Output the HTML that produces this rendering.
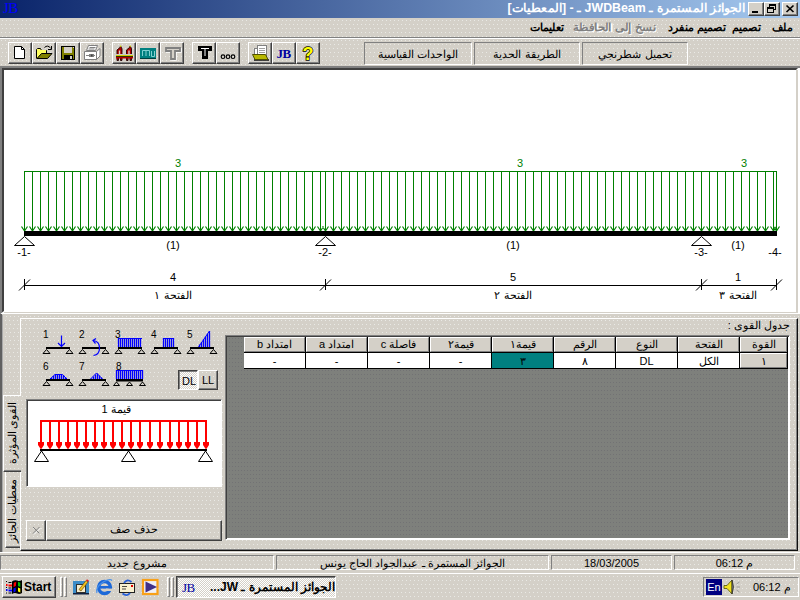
<!DOCTYPE html><html><head><meta charset="utf-8"><title>JWDBeam</title><style>
*{box-sizing:border-box;margin:0;padding:0}
html,body{width:800px;height:600px;overflow:hidden}
body{background:#d4d0c8;font-family:"Liberation Sans",sans-serif;font-size:11px;color:#000;position:relative}
.a{position:absolute}
.t{position:absolute;white-space:nowrap;line-height:1}
.rtl{direction:rtl}
.c{text-align:center}
.raised{border:1px solid;border-color:#fff #404040 #404040 #fff;box-shadow:inset -1px -1px 0 #808080}
.btn{position:absolute;border:1px solid;border-color:#fff #404040 #404040 #fff;box-shadow:inset -1px -1px 0 #808080, inset 1px 1px 0 #d4d0c8}
.sunk{border:1px solid;border-color:#808080 #fff #fff #808080}
</style></head><body>
<svg class="a" style="left:0;top:0" width="800" height="600"><defs><pattern id="dz" width="4" height="8" patternUnits="userSpaceOnUse"><rect x="2" y="4" width="1" height="1" fill="#e9e9e5"/><rect x="1" y="0" width="1" height="1" fill="#e9e9e5"/></pattern></defs><rect width="800" height="600" fill="url(#dz)"/></svg>
<div class="a" style="left:0;top:0;width:800px;height:18px;background:linear-gradient(90deg,#0a246a,#a6caf0)"></div>
<div class="t" style="left:3px;top:1px;font-family:'Liberation Serif',serif;font-size:15px;color:#0000ff;letter-spacing:-0.500px">JB</div>
<div class="t rtl" style="right:55px;top:2px;font-weight:bold;font-size:12px;color:#fff;transform:scaleX(1.028);transform-origin:100% 50%">الجوائز المستمرة ـ JWDBeam ـ - [المعطيات]</div>
<div class="btn" style="left:748px;top:2px;width:16px;height:14px;background:#d4d0c8"></div>
<div class="btn" style="left:764px;top:2px;width:16px;height:14px;background:#d4d0c8"></div>
<div class="btn" style="left:782px;top:2px;width:16px;height:14px;background:#d4d0c8"></div>
<svg class="a" style="left:748px;top:2px" width="50" height="14" viewBox="748 2 50 14" shape-rendering="crispEdges"><rect x="752" y="11" width="6" height="2" fill="#000"/><rect x="769.500" y="4.500" width="6" height="5" fill="none" stroke="#000"/><rect x="769" y="4" width="7" height="2" fill="#000"/><rect x="767.500" y="7.500" width="6" height="5" fill="#d4d0c8" stroke="#000"/><rect x="767" y="7" width="7" height="2" fill="#000"/><path d="M786.500 5.500L793.500 12M793.500 5.500L786.500 12" stroke="#000" stroke-width="1.700" shape-rendering="auto"/></svg>
<div class="t rtl" style="right:7px;top:22px;font-weight:bold;font-size:11px;">ملف</div>
<div class="t rtl" style="right:39px;top:22px;font-weight:bold;font-size:11px;">تصميم</div>
<div class="t rtl" style="right:74px;top:22px;font-weight:bold;font-size:11px;">تصميم منفرد</div>
<div class="t rtl" style="right:144px;top:22px;font-weight:bold;font-size:11px;color:#808080;text-shadow:1px 1px 0 #fff;transform:scaleX(1.08);transform-origin:100% 50%;">نسخ إلى الحافظة</div>
<div class="t rtl" style="right:236px;top:22px;font-weight:bold;font-size:11px;">تعليمات</div>
<div class="a" style="left:0;top:37px;width:800px;height:1px;background:#808080"></div>
<div class="a" style="left:0;top:38px;width:800px;height:1px;background:#fff"></div>
<div class="btn" style="left:8px;top:42px;width:24px;height:22px"></div>
<div class="btn" style="left:32px;top:42px;width:24px;height:22px"></div>
<div class="btn" style="left:56px;top:42px;width:24px;height:22px"></div>
<div class="btn" style="left:80px;top:42px;width:24px;height:22px"></div>
<div class="btn" style="left:112px;top:42px;width:24px;height:22px"></div>
<div class="btn" style="left:136px;top:42px;width:24px;height:22px"></div>
<div class="btn" style="left:160px;top:42px;width:24px;height:22px"></div>
<div class="btn" style="left:192px;top:42px;width:24px;height:22px"></div>
<div class="btn" style="left:216px;top:42px;width:24px;height:22px"></div>
<div class="btn" style="left:248px;top:42px;width:24px;height:22px"></div>
<div class="btn" style="left:272px;top:42px;width:24px;height:22px"></div>
<div class="btn" style="left:296px;top:42px;width:24px;height:22px"></div>
<div class="a" style="left:364px;top:42px;width:108px;height:23px;border:1px solid;border-color:#808080 #fff #fff #808080"></div>
<div class="t rtl c" style="left:364px;top:49px;width:108px;font-size:11px">الواحدات القياسية</div>
<div class="a" style="left:474px;top:42px;width:106px;height:23px;border:1px solid;border-color:#808080 #fff #fff #808080"></div>
<div class="t rtl c" style="left:474px;top:49px;width:106px;font-size:11px">الطريقة الحدية</div>
<div class="a" style="left:582px;top:42px;width:106px;height:23px;border:1px solid;border-color:#808080 #fff #fff #808080"></div>
<div class="t rtl c" style="left:582px;top:49px;width:106px;font-size:11px">تحميل شطرنجي</div>
<svg class="a" style="left:0;top:40px" width="330" height="26" viewBox="0 40 330 26"><path d="M14.5 46.5H21.5L24.5 49.5V58.5H14.5Z" fill="#fff" stroke="#000"/><path d="M21.5 46.5V49.5H24.5" fill="none" stroke="#000"/><path d="M36.5 58.5V49.5L37.5 48.5H40.5L41.5 50.5H46.5V53" fill="#ffff60" stroke="#000"/><path d="M37 50H46V58H37Z" fill="#ffff60"/><path d="M37 58.5L41.5 53.5H52L47.5 58.5Z" fill="#808000" stroke="#000"/><path d="M44.5 47.5Q47.5 44.5 50.5 48" fill="none" stroke="#000"/><path d="M51.5 46V49.5H48" fill="none" stroke="#000"/><rect x="61" y="46" width="14" height="14" fill="#000"/><rect x="62" y="47" width="12" height="12" fill="#808000"/><rect x="64" y="47" width="8" height="6" fill="#d4d0c8"/><rect x="64" y="55" width="9" height="5" fill="#000"/><rect x="70" y="56" width="2" height="3" fill="#d4d0c8"/><rect x="73" y="47" width="1" height="1" fill="#d4d0c8"/><g fill="#fff" stroke="#808080" stroke-width="1"><path d="M88.500 45.500H97.500L95.500 50.500H86.500Z"/><path d="M84.500 51.500H96.500V59.500H84.500Z"/><path d="M96.500 51.500L100 48.500V56L96.500 59.500Z"/></g><path d="M86 55.500H95M89.500 47.500H95.500M88.500 49H94.500" stroke="#808080"/><rect x="89" y="54" width="5" height="3" fill="#808080"/><rect x="91" y="54.500" width="1.500" height="2" fill="#404040"/><path d="M117 60.500V50L120 47.500L120.5 46L121.5 47.500L122 49V60.500H120.5V57H118.5V60.500Z" fill="#b00000" stroke="#200000" stroke-width="0.900"/><rect x="118.8" y="50.500" width="1.400" height="3.500" fill="#d4d0c8"/><rect x="120.2" y="45.500" width="1" height="1.500" fill="#e0e000"/><path d="M126.5 60.500V50L129.5 47.500L130.0 46L131.0 47.500L131.5 49V60.500H130.0V57H128.0V60.500Z" fill="#b00000" stroke="#200000" stroke-width="0.900"/><rect x="128.3" y="50.500" width="1.400" height="3.500" fill="#d4d0c8"/><rect x="129.7" y="45.500" width="1" height="1.500" fill="#e0e000"/><rect x="116" y="54" width="17" height="1" fill="#c8c8c8"/><rect x="116" y="55" width="17" height="1" fill="#d0d000"/><rect x="116" y="56" width="17" height="1" fill="#303000"/><rect x="116" y="57" width="17" height="1.500" fill="#b00000"/><rect x="140" y="48" width="16" height="11" fill="#008080"/><rect x="140" y="58" width="16" height="1" fill="#004040"/><path d="M142.500 56V50.500H149.500V56M146 50.500V56M151.500 51V56.500H154.500V51" fill="none" stroke="#80d0d0" stroke-width="1"/><path d="M166 48H180V51H175V59H171V51H166Z" fill="none" stroke="#fff" stroke-width="1.6" transform="translate(1,1)"/><path d="M166 48H180V51H175V59H171V51H166Z" fill="#d4d0c8" stroke="#808080" stroke-width="1.800"/><path d="M198 46H212V51H208V59H202V51H198Z" fill="#000"/><path d="M201 48.500H209M205 49V56" stroke="#fff" stroke-width="1"/><g fill="none" stroke="#000" stroke-width="1.200"><circle cx="223" cy="56.700" r="1.800"/><circle cx="228" cy="56.700" r="1.800"/><circle cx="233" cy="56.700" r="1.800"/></g><rect x="254.500" y="48.500" width="6" height="6" fill="#fff" stroke="#808080"/><rect x="257.500" y="45.500" width="9" height="10" fill="#fff" stroke="#808080"/><path d="M259 48.500H265M259 50.500H265M259 52.500H265" stroke="#a0a0a0"/><path d="M254 60H269" stroke="#000" stroke-width="1.400"/><path d="M252.500 54.500H265.500L268 59.500H255Z" fill="#b8b800" stroke="#505000"/><text x="276.500" y="57.500" font-family="Liberation Serif,serif" font-weight="bold" font-size="13" fill="#0000a0" letter-spacing="-0.5">JB</text><text x="302.500" y="59.500" font-family="Liberation Sans,sans-serif" font-weight="bold" font-size="18" fill="#ffff00" stroke="#000" stroke-width="1.400" paint-order="stroke" >?</text></svg>
<div class="a" style="left:0;top:66px;width:800px;height:248px;background:#fff;border-style:solid;border-width:4px 4px 3px 4px;border-color:#404040 #fff #fff #404040;box-shadow:inset 0 0 0 0 #000"></div>
<div class="a" style="left:0;top:66px;width:800px;height:2px;background:#808080"></div>
<div class="a" style="left:0;top:66px;width:2px;height:247px;background:#808080"></div>
<div class="a" style="left:796px;top:70px;width:2px;height:243px;background:#d4d0c8"></div>
<div class="a" style="left:4px;top:312px;width:794px;height:1px;background:#d4d0c8"></div>
<svg class="a" style="left:0;top:66px" width="800" height="249" viewBox="0 66 800 249"><path d="M24.5 171V231M32.5 171V231M40.5 171V231M48.5 171V231M56.5 171V231M64.5 171V231M72.5 171V231M80.5 171V231M88.5 171V231M96.5 171V231M104.5 171V231M112.5 171V231M120.5 171V231M128.5 171V231M136.5 171V231M144.5 171V231M152.5 171V231M160.5 171V231M168.5 171V231M176.5 171V231M184.5 171V231M192.5 171V231M200.5 171V231M208.5 171V231M216.5 171V231M224.5 171V231M232.5 171V231M240.5 171V231M248.5 171V231M256.5 171V231M264.5 171V231M272.5 171V231M280.5 171V231M288.5 171V231M296.5 171V231M304.5 171V231M312.5 171V231M320.5 171V231M325.5 171V231M333.5 171V231M341.5 171V231M349.5 171V231M357.5 171V231M365.5 171V231M373.5 171V231M381.5 171V231M389.5 171V231M397.5 171V231M405.5 171V231M413.5 171V231M421.5 171V231M429.5 171V231M437.5 171V231M445.5 171V231M453.5 171V231M461.5 171V231M469.5 171V231M477.5 171V231M485.5 171V231M493.5 171V231M501.5 171V231M509.5 171V231M517.5 171V231M525.5 171V231M533.5 171V231M541.5 171V231M549.5 171V231M557.5 171V231M565.5 171V231M573.5 171V231M581.5 171V231M589.5 171V231M597.5 171V231M605.5 171V231M613.5 171V231M621.5 171V231M629.5 171V231M637.5 171V231M645.5 171V231M653.5 171V231M661.5 171V231M669.5 171V231M677.5 171V231M685.5 171V231M693.5 171V231M701.5 171V231M709.5 171V231M717.5 171V231M725.5 171V231M733.5 171V231M741.5 171V231M749.5 171V231M757.5 171V231M765.5 171V231M773.5 171V231M776.5 171V231" stroke="#008000" stroke-width="1" fill="none" shape-rendering="crispEdges"/><path d="M24 171.500H777" stroke="#008000" stroke-width="1" shape-rendering="crispEdges"/><path d="M21.5 226.5L24.5 231L27.5 226.5M29.5 226.5L32.5 231L35.5 226.5M37.5 226.5L40.5 231L43.5 226.5M45.5 226.5L48.5 231L51.5 226.5M53.5 226.5L56.5 231L59.5 226.5M61.5 226.5L64.5 231L67.5 226.5M69.5 226.5L72.5 231L75.5 226.5M77.5 226.5L80.5 231L83.5 226.5M85.5 226.5L88.5 231L91.5 226.5M93.5 226.5L96.5 231L99.5 226.5M101.5 226.5L104.5 231L107.5 226.5M109.5 226.5L112.5 231L115.5 226.5M117.5 226.5L120.5 231L123.5 226.5M125.5 226.5L128.5 231L131.5 226.5M133.5 226.5L136.5 231L139.5 226.5M141.5 226.5L144.5 231L147.5 226.5M149.5 226.5L152.5 231L155.5 226.5M157.5 226.5L160.5 231L163.5 226.5M165.5 226.5L168.5 231L171.5 226.5M173.5 226.5L176.5 231L179.5 226.5M181.5 226.5L184.5 231L187.5 226.5M189.5 226.5L192.5 231L195.5 226.5M197.5 226.5L200.5 231L203.5 226.5M205.5 226.5L208.5 231L211.5 226.5M213.5 226.5L216.5 231L219.5 226.5M221.5 226.5L224.5 231L227.5 226.5M229.5 226.5L232.5 231L235.5 226.5M237.5 226.5L240.5 231L243.5 226.5M245.5 226.5L248.5 231L251.5 226.5M253.5 226.5L256.5 231L259.5 226.5M261.5 226.5L264.5 231L267.5 226.5M269.5 226.5L272.5 231L275.5 226.5M277.5 226.5L280.5 231L283.5 226.5M285.5 226.5L288.5 231L291.5 226.5M293.5 226.5L296.5 231L299.5 226.5M301.5 226.5L304.5 231L307.5 226.5M309.5 226.5L312.5 231L315.5 226.5M317.5 226.5L320.5 231L323.5 226.5M322.5 226.5L325.5 231L328.5 226.5M330.5 226.5L333.5 231L336.5 226.5M338.5 226.5L341.5 231L344.5 226.5M346.5 226.5L349.5 231L352.5 226.5M354.5 226.5L357.5 231L360.5 226.5M362.5 226.5L365.5 231L368.5 226.5M370.5 226.5L373.5 231L376.5 226.5M378.5 226.5L381.5 231L384.5 226.5M386.5 226.5L389.5 231L392.5 226.5M394.5 226.5L397.5 231L400.5 226.5M402.5 226.5L405.5 231L408.5 226.5M410.5 226.5L413.5 231L416.5 226.5M418.5 226.5L421.5 231L424.5 226.5M426.5 226.5L429.5 231L432.5 226.5M434.5 226.5L437.5 231L440.5 226.5M442.5 226.5L445.5 231L448.5 226.5M450.5 226.5L453.5 231L456.5 226.5M458.5 226.5L461.5 231L464.5 226.5M466.5 226.5L469.5 231L472.5 226.5M474.5 226.5L477.5 231L480.5 226.5M482.5 226.5L485.5 231L488.5 226.5M490.5 226.5L493.5 231L496.5 226.5M498.5 226.5L501.5 231L504.5 226.5M506.5 226.5L509.5 231L512.5 226.5M514.5 226.5L517.5 231L520.5 226.5M522.5 226.5L525.5 231L528.5 226.5M530.5 226.5L533.5 231L536.5 226.5M538.5 226.5L541.5 231L544.5 226.5M546.5 226.5L549.5 231L552.5 226.5M554.5 226.5L557.5 231L560.5 226.5M562.5 226.5L565.5 231L568.5 226.5M570.5 226.5L573.5 231L576.5 226.5M578.5 226.5L581.5 231L584.5 226.5M586.5 226.5L589.5 231L592.5 226.5M594.5 226.5L597.5 231L600.5 226.5M602.5 226.5L605.5 231L608.5 226.5M610.5 226.5L613.5 231L616.5 226.5M618.5 226.5L621.5 231L624.5 226.5M626.5 226.5L629.5 231L632.5 226.5M634.5 226.5L637.5 231L640.5 226.5M642.5 226.5L645.5 231L648.5 226.5M650.5 226.5L653.5 231L656.5 226.5M658.5 226.5L661.5 231L664.5 226.5M666.5 226.5L669.5 231L672.5 226.5M674.5 226.5L677.5 231L680.5 226.5M682.5 226.5L685.5 231L688.5 226.5M690.5 226.5L693.5 231L696.5 226.5M698.5 226.5L701.5 231L704.5 226.5M706.5 226.5L709.5 231L712.5 226.5M714.5 226.5L717.5 231L720.5 226.5M722.5 226.5L725.5 231L728.5 226.5M730.5 226.5L733.5 231L736.5 226.5M738.5 226.5L741.5 231L744.5 226.5M746.5 226.5L749.5 231L752.5 226.5M754.5 226.5L757.5 231L760.5 226.5M762.5 226.5L765.5 231L768.5 226.5M770.5 226.5L773.5 231L776.5 226.5M773.5 226.5L776.5 231L779.5 226.5" stroke="#008000" stroke-width="1.2" fill="none"/><rect x="24" y="231" width="753" height="5" fill="#000"/><path d="M24.5 236.5L14.5 245.5H34.5Z" fill="#fff" stroke="#000" stroke-width="1"/><path d="M325.5 236.5L315.5 245.5H335.5Z" fill="#fff" stroke="#000" stroke-width="1"/><path d="M701.5 236.5L691.5 245.5H711.5Z" fill="#fff" stroke="#000" stroke-width="1"/><path d="M24 285.500H777" stroke="#000" stroke-width="1" shape-rendering="crispEdges"/><path d="M24.5 279V290" stroke="#000" stroke-width="1" shape-rendering="crispEdges"/><path d="M19 290.500L30 279.500" stroke="#000" stroke-width="1"/><path d="M325.5 279V290" stroke="#000" stroke-width="1" shape-rendering="crispEdges"/><path d="M320 290.500L331 279.500" stroke="#000" stroke-width="1"/><path d="M701.5 279V290" stroke="#000" stroke-width="1" shape-rendering="crispEdges"/><path d="M696 290.500L707 279.500" stroke="#000" stroke-width="1"/><path d="M776.5 279V290" stroke="#000" stroke-width="1" shape-rendering="crispEdges"/><path d="M771 290.500L782 279.500" stroke="#000" stroke-width="1"/></svg>
<div class="t c" style="left:138px;top:158px;width:80px;font-size:11px;color:#008000;">3</div>
<div class="t c" style="left:480px;top:158px;width:80px;font-size:11px;color:#008000;">3</div>
<div class="t c" style="left:704px;top:158px;width:80px;font-size:11px;color:#008000;">3</div>
<div class="t c" style="left:133px;top:240px;width:80px;font-size:11px;color:#000;">(1)</div>
<div class="t c" style="left:473px;top:240px;width:80px;font-size:11px;color:#000;">(1)</div>
<div class="t c" style="left:698px;top:240px;width:80px;font-size:11px;color:#000;">(1)</div>
<div class="t c" style="left:-16px;top:247px;width:80px;font-size:11px;color:#000;">-1-</div>
<div class="t c" style="left:285px;top:247px;width:80px;font-size:11px;color:#000;">-2-</div>
<div class="t c" style="left:661px;top:247px;width:80px;font-size:11px;color:#000;">-3-</div>
<div class="t c" style="left:735px;top:247px;width:80px;font-size:11px;color:#000;">-4-</div>
<div class="t c" style="left:133px;top:272px;width:80px;font-size:11px;color:#000;">4</div>
<div class="t c" style="left:473px;top:272px;width:80px;font-size:11px;color:#000;">5</div>
<div class="t c" style="left:698px;top:272px;width:80px;font-size:11px;color:#000;">1</div>
<div class="t c" style="left:133px;top:290px;width:80px;font-size:11px;color:#000;direction:rtl;">الفتحة ١</div>
<div class="t c" style="left:473px;top:290px;width:80px;font-size:11px;color:#000;direction:rtl;">الفتحة ٢</div>
<div class="t c" style="left:698px;top:290px;width:80px;font-size:11px;color:#000;direction:rtl;">الفتحة ٣</div>
<div class="a" style="left:0;top:314px;width:2px;height:238px;background:#606060"></div>
<div class="a" style="left:2px;top:315px;width:1px;height:237px;background:#a8a8a8"></div>
<div class="a" style="left:20px;top:318px;width:778px;height:233px;border:1px solid;border-color:#fff #101010 #101010 #fff;box-shadow:inset -1px -1px 0 #808080"></div>
<div class="a" style="left:20px;top:396px;width:1px;height:74px;background:#d4d0c8"></div>
<div class="a" style="left:3px;top:395px;width:18px;height:77px;border:1px solid;border-color:#fff transparent #404040 #fff;border-right:none;box-shadow:inset 0 -1px 0 #808080"></div>
<div class="a" style="left:5px;top:472px;width:15px;height:76px;border:1px solid;border-color:transparent transparent #404040 #fff;border-right:none;border-top:none;box-shadow:inset 0 -1px 0 #808080"></div>
<div class="t rtl" style="left:12px;top:433px;font-size:10.500px;transform:translate(-50%,-50%) rotate(-90deg);transform-origin:50% 50%">القوى المؤثرة</div>
<div class="t rtl" style="left:12px;top:511px;font-size:11px;transform:translate(-50%,-50%) rotate(-90deg);transform-origin:50% 50%">معطيات الجائز</div>
<svg class="a" style="left:30px;top:325px" width="195" height="65" viewBox="30 325 195 65"><rect x="46" y="347" width="24" height="2" fill="#000"/><path d="M46.5 349.5L43.0 353.5H50.0Z" fill="#d4d0c8" stroke="#000" stroke-width="1"/><path d="M69.5 349.5L66.0 353.5H73.0Z" fill="#d4d0c8" stroke="#000" stroke-width="1"/><rect x="82" y="347" width="24" height="2" fill="#000"/><path d="M82.5 349.5L79.0 353.5H86.0Z" fill="#d4d0c8" stroke="#000" stroke-width="1"/><path d="M105.5 349.5L102.0 353.5H109.0Z" fill="#d4d0c8" stroke="#000" stroke-width="1"/><rect x="118" y="347" width="24" height="2" fill="#000"/><path d="M118.5 349.5L115.0 353.5H122.0Z" fill="#d4d0c8" stroke="#000" stroke-width="1"/><path d="M141.5 349.5L138.0 353.5H145.0Z" fill="#d4d0c8" stroke="#000" stroke-width="1"/><rect x="154" y="347" width="24" height="2" fill="#000"/><path d="M154.5 349.5L151.0 353.5H158.0Z" fill="#d4d0c8" stroke="#000" stroke-width="1"/><path d="M177.5 349.5L174.0 353.5H181.0Z" fill="#d4d0c8" stroke="#000" stroke-width="1"/><rect x="190" y="347" width="24" height="2" fill="#000"/><path d="M190.5 349.5L187.0 353.5H194.0Z" fill="#d4d0c8" stroke="#000" stroke-width="1"/><path d="M213.5 349.5L210.0 353.5H217.0Z" fill="#d4d0c8" stroke="#000" stroke-width="1"/><rect x="46" y="379" width="24" height="2" fill="#000"/><path d="M46.5 381.5L43.0 385.5H50.0Z" fill="#d4d0c8" stroke="#000" stroke-width="1"/><path d="M69.5 381.5L66.0 385.5H73.0Z" fill="#d4d0c8" stroke="#000" stroke-width="1"/><rect x="82" y="379" width="24" height="2" fill="#000"/><path d="M82.5 381.5L79.0 385.5H86.0Z" fill="#d4d0c8" stroke="#000" stroke-width="1"/><path d="M105.5 381.5L102.0 385.5H109.0Z" fill="#d4d0c8" stroke="#000" stroke-width="1"/><path d="M61.5 335.500V346.500M58 343L61.500 346.500L65 343" stroke="#0000ff" stroke-width="1.200" fill="none"/><path d="M93.500 340.500Q99.500 341.500 99.500 348Q99.500 354.500 93.500 355.500" stroke="#0000ff" stroke-width="1.200" fill="none"/><path d="M96 338.500L93 340.500L95.500 343.500" stroke="#0000ff" stroke-width="1.200" fill="none"/><path d="M118.5 338.0V347M120.5 338.0V347M122.5 338.0V347M124.5 338.0V347M126.5 338.0V347M128.5 338.0V347M130.5 338.0V347M132.5 338.0V347M134.5 338.0V347M136.5 338.0V347M138.5 338.0V347M140.5 338.0V347" stroke="#0000ff" stroke-width="1.3" fill="none"/><path d="M118 338.500H142" stroke="#0000ff" stroke-width="1"/><path d="M163.5 338.0V347M165.5 338.0V347M167.5 338.0V347M169.5 338.0V347M171.5 338.0V347M173.5 338.0V347" stroke="#0000ff" stroke-width="1.3" fill="none"/><path d="M163 338.500H174" stroke="#0000ff" stroke-width="1"/><path d="M199.5 344.6V347M201.5 341.9V347M203.5 339.2V347M205.5 336.5V347M207.5 333.7V347M209.5 331.0V347" stroke="#0000ff" stroke-width="1.3" fill="none"/><path d="M198.500 347L209.500 331" stroke="#0000ff" stroke-width="1"/><path d="M51.5 378.0V379M53.5 376.0V379M55.5 374.0V379M57.5 374.0V379M59.5 374.0V379M61.5 374.0V379M63.5 375.0V379M65.5 377.0V379" stroke="#0000ff" stroke-width="1.3" fill="none"/><path d="M50 379L55 374.500H62.500L67 379" stroke="#0000ff" stroke-width="1" fill="none"/><path d="M91.5 378.5V379M93.5 376.5V379M95.5 374.5V379M97.5 373.5V379M99.5 375.5V379M101.5 377.5V379" stroke="#0000ff" stroke-width="1.3" fill="none"/><path d="M90.500 379L96.500 373L102.500 379" stroke="#0000ff" stroke-width="1" fill="none"/><path d="M116.5 370.0V379M118.5 370.0V379M120.5 370.0V379M122.5 370.0V379M124.5 370.0V379M126.5 370.0V379M128.5 370.0V379M130.5 370.0V379M132.5 370.0V379M134.5 370.0V379M136.5 370.0V379M138.5 370.0V379M140.5 370.0V379M142.5 370.0V379" stroke="#0000ff" stroke-width="1.3" fill="none"/><path d="M116 370.500H143" stroke="#0000ff" stroke-width="1"/><rect x="116" y="379" width="27" height="2.500" fill="#000"/><path d="M116.5 382L113.5 385.500H119.5Z" fill="#d4d0c8" stroke="#000" stroke-width="1"/><path d="M129.5 382L126.5 385.500H132.5Z" fill="#d4d0c8" stroke="#000" stroke-width="1"/><path d="M142.5 382L139.5 385.500H145.5Z" fill="#d4d0c8" stroke="#000" stroke-width="1"/></svg>
<div class="t" style="left:43px;top:330px;font-size:10px">1</div>
<div class="t" style="left:79px;top:330px;font-size:10px">2</div>
<div class="t" style="left:115px;top:330px;font-size:10px">3</div>
<div class="t" style="left:151px;top:330px;font-size:10px">4</div>
<div class="t" style="left:187px;top:330px;font-size:10px">5</div>
<div class="t" style="left:43px;top:362px;font-size:10px">6</div>
<div class="t" style="left:79px;top:362px;font-size:10px">7</div>
<div class="t" style="left:116px;top:362px;font-size:10px">8</div>
<div class="a" style="left:178px;top:370px;width:20px;height:20px;border:1px solid;border-color:#404040 #fff #fff #404040;box-shadow:inset 1px 1px 0 #808080;background-color:#fff;background-image:linear-gradient(45deg,#d4d0c8 25%,transparent 25%,transparent 75%,#d4d0c8 75%),linear-gradient(45deg,#d4d0c8 25%,transparent 25%,transparent 75%,#d4d0c8 75%);background-size:2px 2px;background-position:0 0,1px 1px"></div>
<div class="btn" style="left:198px;top:370px;width:20px;height:20px"></div>
<div class="t c" style="left:179px;top:376px;width:20px;font-size:11px">DL</div>
<div class="t c" style="left:198px;top:375px;width:20px;font-size:11px">LL</div>
<div class="a" style="left:26px;top:399px;width:196px;height:88px;background:#fff;border:1px solid;border-color:#808080 #fff #fff #808080;box-shadow:inset 1px 1px 0 #404040"></div>
<div class="t c rtl" style="left:76px;top:404px;width:80px;font-size:11px">قيمة 1</div>
<svg class="a" style="left:26px;top:399px" width="196" height="88" viewBox="26 399 196 88"><rect x="40" y="420" width="167" height="2" fill="#ff0000"/><rect x="40" y="420" width="2" height="23" fill="#ff0000"/><path d="M38 442H44V445L41 449.500L38 445Z" fill="#ff0000"/><rect x="49" y="420" width="2" height="23" fill="#ff0000"/><path d="M47 442H53V445L50 449.500L47 445Z" fill="#ff0000"/><rect x="58" y="420" width="2" height="23" fill="#ff0000"/><path d="M56 442H62V445L59 449.500L56 445Z" fill="#ff0000"/><rect x="67" y="420" width="2" height="23" fill="#ff0000"/><path d="M65 442H71V445L68 449.500L65 445Z" fill="#ff0000"/><rect x="76" y="420" width="2" height="23" fill="#ff0000"/><path d="M74 442H80V445L77 449.500L74 445Z" fill="#ff0000"/><rect x="85" y="420" width="2" height="23" fill="#ff0000"/><path d="M83 442H89V445L86 449.500L83 445Z" fill="#ff0000"/><rect x="94" y="420" width="2" height="23" fill="#ff0000"/><path d="M92 442H98V445L95 449.500L92 445Z" fill="#ff0000"/><rect x="103" y="420" width="2" height="23" fill="#ff0000"/><path d="M101 442H107V445L104 449.500L101 445Z" fill="#ff0000"/><rect x="112" y="420" width="2" height="23" fill="#ff0000"/><path d="M110 442H116V445L113 449.500L110 445Z" fill="#ff0000"/><rect x="121" y="420" width="2" height="23" fill="#ff0000"/><path d="M119 442H125V445L122 449.500L119 445Z" fill="#ff0000"/><rect x="130" y="420" width="2" height="23" fill="#ff0000"/><path d="M128 442H134V445L131 449.500L128 445Z" fill="#ff0000"/><rect x="139" y="420" width="2" height="23" fill="#ff0000"/><path d="M137 442H143V445L140 449.500L137 445Z" fill="#ff0000"/><rect x="149" y="420" width="2" height="23" fill="#ff0000"/><path d="M147 442H153V445L150 449.500L147 445Z" fill="#ff0000"/><rect x="159" y="420" width="2" height="23" fill="#ff0000"/><path d="M157 442H163V445L160 449.500L157 445Z" fill="#ff0000"/><rect x="169" y="420" width="2" height="23" fill="#ff0000"/><path d="M167 442H173V445L170 449.500L167 445Z" fill="#ff0000"/><rect x="178" y="420" width="2" height="23" fill="#ff0000"/><path d="M176 442H182V445L179 449.500L176 445Z" fill="#ff0000"/><rect x="187" y="420" width="2" height="23" fill="#ff0000"/><path d="M185 442H191V445L188 449.500L185 445Z" fill="#ff0000"/><rect x="196" y="420" width="2" height="23" fill="#ff0000"/><path d="M194 442H200V445L197 449.500L194 445Z" fill="#ff0000"/><rect x="205" y="420" width="2" height="23" fill="#ff0000"/><path d="M203 442H209V445L206 449.500L203 445Z" fill="#ff0000"/><rect x="40" y="449" width="167" height="2" fill="#000"/><path d="M41.5 451L34.5 461.500H48.5Z" fill="#fff" stroke="#000" stroke-width="1"/><path d="M128.5 451L121.5 461.500H135.5Z" fill="#fff" stroke="#000" stroke-width="1"/><path d="M205.5 451L198.5 461.500H212.5Z" fill="#fff" stroke="#000" stroke-width="1"/></svg>
<div class="btn" style="left:26px;top:520px;width:20px;height:21px"></div>
<svg class="a" style="left:31px;top:525px" width="10" height="10" viewBox="0 0 10 10"><path d="M2 2L8.5 8.5M8.5 2L2 8.5" stroke="#fff" stroke-width="1" transform="translate(1,1)"/><path d="M2 2L8.5 8.5M8.5 2L2 8.5" stroke="#808080" stroke-width="1"/></svg>
<div class="btn" style="left:46px;top:520px;width:176px;height:21px"></div>
<div class="t c rtl" style="left:46px;top:524px;width:176px;font-size:11px">حذف صف</div>
<div class="t rtl" style="right:10px;top:320px;font-size:11px">جدول القوى :</div>
<div class="a" style="left:225px;top:335px;width:565px;height:205px;background:#7e807c;border:1px solid;border-color:#808080 #fff #fff #808080;box-shadow:inset 1px 1px 0 #404040, inset -1px -1px 0 #fff"></div>
<svg class="a" style="left:227px;top:337px" width="561" height="201"><defs><pattern id="dg" width="3" height="4" patternUnits="userSpaceOnUse"><rect x="2" y="1" width="1" height="1" fill="#727274"/></pattern></defs><rect width="561" height="201" fill="url(#dg)"/></svg>
<div class="a" style="left:244px;top:337px;width:544px;height:32px;background:#000"></div>
<div class="a" style="left:244px;top:337px;width:61px;height:15px;background:#d4d0c8;border:1px solid;border-color:#fff #808080 #808080 #fff"></div>
<div class="t c rtl" style="left:244px;top:339px;width:61px;font-size:11px">امتداد b</div>
<div class="a" style="left:244px;top:353px;width:61px;height:15px;background:#fff"></div>
<div class="t c rtl" style="left:244px;top:356px;width:61px;font-size:11px">-</div>
<div class="a" style="left:306px;top:337px;width:61px;height:15px;background:#d4d0c8;border:1px solid;border-color:#fff #808080 #808080 #fff"></div>
<div class="t c rtl" style="left:306px;top:339px;width:61px;font-size:11px">امتداد a</div>
<div class="a" style="left:306px;top:353px;width:61px;height:15px;background:#fff"></div>
<div class="t c rtl" style="left:306px;top:356px;width:61px;font-size:11px">-</div>
<div class="a" style="left:368px;top:337px;width:61px;height:15px;background:#d4d0c8;border:1px solid;border-color:#fff #808080 #808080 #fff"></div>
<div class="t c rtl" style="left:368px;top:339px;width:61px;font-size:11px">فاصلة c</div>
<div class="a" style="left:368px;top:353px;width:61px;height:15px;background:#fff"></div>
<div class="t c rtl" style="left:368px;top:356px;width:61px;font-size:11px">-</div>
<div class="a" style="left:430px;top:337px;width:61px;height:15px;background:#d4d0c8;border:1px solid;border-color:#fff #808080 #808080 #fff"></div>
<div class="t c rtl" style="left:430px;top:339px;width:61px;font-size:11px">قيمة٢</div>
<div class="a" style="left:430px;top:353px;width:61px;height:15px;background:#fff"></div>
<div class="t c rtl" style="left:430px;top:356px;width:61px;font-size:11px">-</div>
<div class="a" style="left:492px;top:337px;width:61px;height:15px;background:#d4d0c8;border:1px solid;border-color:#fff #808080 #808080 #fff"></div>
<div class="t c rtl" style="left:492px;top:339px;width:61px;font-size:11px">قيمة١</div>
<div class="a" style="left:492px;top:353px;width:61px;height:15px;background:#008080"></div>
<div class="t c rtl" style="left:492px;top:356px;width:61px;font-size:11px">٣</div>
<div class="a" style="left:554px;top:337px;width:61px;height:15px;background:#d4d0c8;border:1px solid;border-color:#fff #808080 #808080 #fff"></div>
<div class="t c rtl" style="left:554px;top:339px;width:61px;font-size:11px">الرقم</div>
<div class="a" style="left:554px;top:353px;width:61px;height:15px;background:#fff"></div>
<div class="t c rtl" style="left:554px;top:356px;width:61px;font-size:11px">٨</div>
<div class="a" style="left:616px;top:337px;width:61px;height:15px;background:#d4d0c8;border:1px solid;border-color:#fff #808080 #808080 #fff"></div>
<div class="t c rtl" style="left:616px;top:339px;width:61px;font-size:11px">النوع</div>
<div class="a" style="left:616px;top:353px;width:61px;height:15px;background:#fff"></div>
<div class="t c rtl" style="left:616px;top:356px;width:61px;font-size:11px">DL</div>
<div class="a" style="left:678px;top:337px;width:61px;height:15px;background:#d4d0c8;border:1px solid;border-color:#fff #808080 #808080 #fff"></div>
<div class="t c rtl" style="left:678px;top:339px;width:61px;font-size:11px">الفتحة</div>
<div class="a" style="left:678px;top:353px;width:61px;height:15px;background:#fff"></div>
<div class="t c rtl" style="left:678px;top:356px;width:61px;font-size:11px">الكل</div>
<div class="a" style="left:740px;top:337px;width:47px;height:15px;background:#d4d0c8;border:1px solid;border-color:#fff #808080 #808080 #fff"></div>
<div class="t c rtl" style="left:740px;top:339px;width:47px;font-size:11px">القوة</div>
<div class="a" style="left:740px;top:353px;width:47px;height:15px;background:#d4d0c8;border:1px solid;border-color:#fff #808080 #808080 #fff"></div>
<div class="t c rtl" style="left:740px;top:356px;width:47px;font-size:11px">١</div>
<div class="a" style="left:0;top:552px;width:800px;height:1px;background:#fff"></div>
<div class="a sunk" style="left:0px;top:555px;width:274px;height:15px"></div>
<div class="t c rtl" style="left:0px;top:558px;width:274px;font-size:11px">مشروع جديد</div>
<div class="a sunk" style="left:276px;top:555px;width:273px;height:15px"></div>
<div class="t c rtl" style="left:276px;top:558px;width:273px;font-size:11px">الجوائز المستمرة ـ عبدالجواد الحاج يونس</div>
<div class="a sunk" style="left:551px;top:555px;width:121px;height:15px"></div>
<div class="t c" style="left:551px;top:558px;width:121px;font-size:11px">18/03/2005</div>
<div class="a sunk" style="left:674px;top:555px;width:121px;height:15px"></div>
<div class="t c" style="left:674px;top:558px;width:121px;font-size:11px">06:12 م</div>
<div class="a" style="left:0;top:572px;width:800px;height:1px;background:#d4d0c8"></div>
<div class="a" style="left:0;top:573px;width:800px;height:1px;background:#fff"></div>
<div class="btn" style="left:2px;top:576px;width:54px;height:22px"></div>
<div class="t" style="left:24px;top:581px;font-weight:bold;font-size:12px">Start</div>
<svg class="a" style="left:4px;top:578px" width="20" height="18" viewBox="4 578 20 18"><path d="M12 581.5Q14.500 579.500 17 580.500Q19.500 581.500 22 580V593Q19.500 594.500 17 593.500Q14.500 592.500 12 594Z" fill="#000"/><path d="M13.800 582.800L16.300 581.800L15.800 586L13.500 587Z" fill="#ff0000"/><path d="M18 581.800L20.300 582.800L20.300 587L18 586Z" fill="#00c000"/><path d="M13.500 588.500L15.800 587.500L15.600 591.500L13.500 592.500Z" fill="#0000ff"/><path d="M18 587.500L20.300 588.500L20.300 592.500L18 591.500Z" fill="#ffff00"/><rect x="6" y="584" width="1.500" height="2" fill="#ff0000"/><rect x="8.500" y="584.500" width="3.500" height="2" fill="#ff0000"/><rect x="6" y="589" width="1.500" height="2" fill="#0000ff"/><rect x="8.500" y="589.500" width="3.500" height="2" fill="#0000ff"/><rect x="6" y="581" width="1" height="1" fill="#000"/><rect x="8.500" y="582" width="3" height="1" fill="#000"/><rect x="6" y="587" width="1" height="1" fill="#000"/><rect x="8.500" y="587.500" width="3" height="1" fill="#000"/><rect x="6" y="592.500" width="1" height="1" fill="#000"/><rect x="8.500" y="592.500" width="3" height="1" fill="#000"/></svg>
<div class="a" style="left:60px;top:577px;width:3px;height:20px;border:1px solid;border-color:#fff #808080 #808080 #fff"></div>
<div class="a" style="left:64px;top:577px;width:3px;height:20px;border:1px solid;border-color:#fff #808080 #808080 #fff"></div>
<div class="a" style="left:167px;top:577px;width:3px;height:20px;border:1px solid;border-color:#fff #808080 #808080 #fff"></div>
<div class="a" style="left:171px;top:577px;width:3px;height:20px;border:1px solid;border-color:#fff #808080 #808080 #fff"></div>
<svg class="a" style="left:70px;top:576px" width="92" height="22" viewBox="70 576 92 22"><rect x="73" y="581" width="16" height="13" fill="#3c8cc8"/><rect x="73" y="593" width="16" height="1.500" fill="#102040"/><rect x="76.500" y="584.500" width="9" height="8" fill="#f4ecd0" stroke="#303030" stroke-width="1"/><path d="M79 589.500L86 580.500L88 582L81 591Z" fill="#f0c020" stroke="#604000" stroke-width="0.600"/><path d="M86 580.500L87 579.300L89 580.800L88 582Z" fill="#e02020"/><circle cx="104.500" cy="587.500" r="6" fill="none" stroke="#1c68d8" stroke-width="3.400"/><rect x="100" y="586" width="10" height="2.600" fill="#1c68d8"/><rect x="106" y="588.600" width="6.500" height="2.400" fill="#d4d0c8"/><path d="M97 593Q95 587 104 581.500Q110 578.500 112 580.500" fill="none" stroke="#4890e8" stroke-width="1.300"/><rect x="119.500" y="583.500" width="15" height="9" fill="#f8f0d0" stroke="#202020" stroke-width="1"/><rect x="131" y="585" width="2" height="2" fill="#e00000"/><path d="M124 583Q127 578.500 131.500 582" fill="none" stroke="#2860d8" stroke-width="1.800"/><path d="M130 593Q127 597 122.500 593.500" fill="none" stroke="#2860d8" stroke-width="1.800"/><path d="M122 586.500H127M122 589H126" stroke="#202020" stroke-width="0.800"/><rect x="143" y="580" width="14.500" height="14" fill="#f0f0f8" stroke="#f8a018" stroke-width="2.200"/><path d="M145.500 581.500L157 587L145.500 592.500Z" fill="#403088"/></svg>
<div class="a" style="left:176px;top:576px;width:160px;height:22px;border:1px solid;border-color:#404040 #fff #fff #404040;box-shadow:inset 1px 1px 0 #808080;background-color:#fff;background-image:linear-gradient(45deg,#d4d0c8 25%,transparent 25%,transparent 75%,#d4d0c8 75%),linear-gradient(45deg,#d4d0c8 25%,transparent 25%,transparent 75%,#d4d0c8 75%);background-size:2px 2px;background-position:0 0,1px 1px"></div>
<div class="t" style="left:182px;top:581px;font-family:'Liberation Serif',serif;font-size:13px;color:#0000a0;letter-spacing:-0.500px">JB</div>
<div class="t rtl" style="left:200px;top:581px;width:135px;font-weight:bold;font-size:12px;text-align:right">الجوائز المستمرة ـ JW...</div>
<div class="a sunk" style="left:703px;top:577px;width:96px;height:20px"></div>
<div class="a" style="left:706px;top:579px;width:16px;height:16px;background:#000080"></div>
<div class="t c" style="left:706px;top:582px;width:16px;color:#fff;font-size:11px">En</div>
<div class="t" style="left:753px;top:582px;font-size:11px">06:12 م</div>
<svg class="a" style="left:722px;top:578px" width="20" height="18" viewBox="722 578 20 18"><path d="M724 585.500L727 585.500L732 580V594L727 588.500H724Z" fill="#f0e020" stroke="#505000" stroke-width="0.800"/><path d="M732 580Q735 587 732 594Z" fill="#909090" stroke="#303030" stroke-width="0.800"/><path d="M736.500 584L739.500 582M736.500 587H740M736.500 590L739.500 592" stroke="#909090" stroke-width="0.800"/></svg>
</body></html>
